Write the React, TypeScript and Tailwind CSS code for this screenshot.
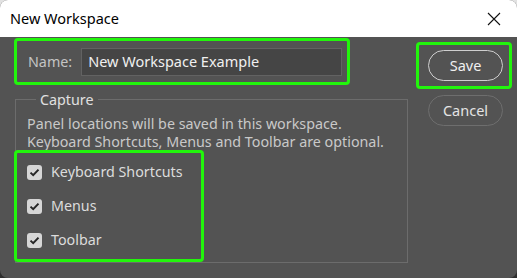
import React from "react";

const font = { fontFamily: '"Noto Sans", "Open Sans", sans-serif' };

function Check({ label }: { label: string }) {
  return (
    <label className="flex items-center h-[34px] gap-[9px]">
      <span className="w-[15px] h-[15px] rounded-[3px] bg-[#d6d6d6] flex items-center justify-center">
        <svg width="11" height="9" viewBox="0 0 11 9">
          <path d="M1.5 4.6 L4.2 7.2 L9.5 1.6" fill="none" stroke="#262626" strokeWidth="2" />
        </svg>
      </span>
      <span className="text-[14.3px] text-[#dcdcdc]">{label}</span>
    </label>
  );
}

export default function App() {
  return (
    <div
      className="w-[517px] h-[278px] bg-linear-to-b from-[#e2e2e2] from-[12%] to-[#2f2f2f] to-[14%]"
      style={font}
    >
      <div className="w-full h-full rounded-[8px] overflow-hidden flex flex-col bg-[#535353]">
        {/* title bar */}
        <div className="h-[37px] bg-white flex items-center justify-between pl-[10px] pr-[16px] shrink-0">
          <span className="text-[14.5px] text-black">New Workspace</span>
          <svg width="14" height="14" viewBox="0 0 14 14">
            <path d="M1 1 L13 13 M13 1 L1 13" stroke="#111" strokeWidth="1.1" />
          </svg>
        </div>

        <div className="flex flex-1">
          {/* left column */}
          <div className="w-[416px] pl-[14px] flex flex-col">
            <div className="mt-[1px] w-[336px] h-[47px] border-[3px] border-[#22f50c] rounded-[4px] flex items-center pl-[11px] gap-[9px]">
              <span className="text-[14.3px] text-[#c4c4c4]">Name:</span>
              <div className="w-[261px] h-[28px] bg-[#454545] border border-[#626262] flex items-center pl-[6px] text-[14.5px] text-[#f0f0f0]">
                New Workspace Example
              </div>
            </div>

            <div className="mt-[14px] ml-[1px] w-[393px] h-[164px] border border-[#6c6c6c] relative flex flex-col">
              <span className="absolute -top-[11px] left-[20px] px-[4px] bg-[#535353] text-[14.3px] text-[#e0e0e0]">
                Capture
              </span>
              <div className="pt-[15px] pl-[11px] text-[14.3px] leading-[18px] text-[#c9c9c9]">
                <div>Panel locations will be saved in this workspace.</div>
                <div>Keyboard Shortcuts, Menus and Toolbar are optional.</div>
              </div>
              <div className="-ml-[2px] -mt-[1px] w-[190px] h-[112px] border-[3px] border-[#22f50c] rounded-[4px] flex flex-col justify-center pl-[10px]">
                <Check label="Keyboard Shortcuts" />
                <Check label="Menus" />
                <Check label="Toolbar" />
              </div>
            </div>
          </div>

          {/* right column */}
          <div className="flex flex-col">
            <div className="mt-[5px] w-[96px] h-[47px] border-[3px] border-[#22f50c] rounded-[4px] flex items-center pl-[9px]">
              <button className="w-[75px] h-[31px] rounded-full border-[1.5px] border-[#cfcfcf] text-[14.5px] text-[#f0f0f0]">
                Save
              </button>
            </div>
            <button className="mt-[6px] ml-[12px] w-[75px] h-[31px] rounded-full border border-[#6e6e6e] text-[14.5px] text-[#e4e4e4]">
              Cancel
            </button>
          </div>
        </div>
      </div>
    </div>
  );
}
